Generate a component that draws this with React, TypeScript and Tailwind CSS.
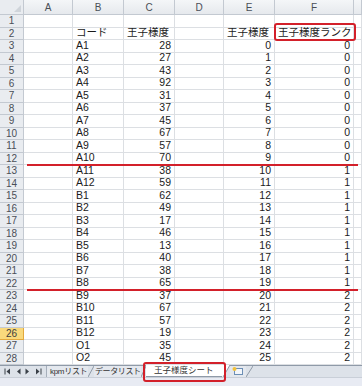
import React from "react";

const codes = ["A1","A2","A3","A4","A5","A6","A7","A8","A9","A10","A11","A12","B1","B2","B3","B4","B5","B6","B7","B8","B9","B10","B11","B12","O1","O2"];
const vals = [28,27,43,92,31,37,45,67,57,70,38,59,62,49,17,46,13,40,38,65,37,67,57,19,35,45];

const widths = ["w-[49px]", "w-[51px]", "w-[51px]", "w-[49px]", "w-[51px]", "w-[79px]", "w-[8px]"];
const letters = ["A", "B", "C", "D", "E", "F", ""];

const font = { fontFamily: '"Liberation Sans", "Noto Sans CJK JP", sans-serif' };

function Cell({ i, children, right }: { i: number; children?: React.ReactNode; right?: boolean }) {
  return (
    <div
      className={`${widths[i]} h-full shrink-0 border-r border-b border-[#dcdfe3] flex items-center overflow-visible whitespace-nowrap text-[#1a1a1a] ${right ? "justify-end pr-[3px]" : "justify-start pl-[3px]"}`}
    >
      {children}
    </div>
  );
}

function Row({ n, cells }: { n: number; cells: { t?: React.ReactNode; r?: boolean }[] }) {
  const active = n === 26;
  return (
    <div className="flex h-[12.5px]">
      <div
        className={`w-[24px] shrink-0 h-full flex items-center justify-center text-[10px] border-r border-b ${
          active
            ? "bg-[#f9d97c] border-[#e2a83c] text-[#3c3c3c]"
            : "bg-[#e9ecf0] border-[#c3c9d1] text-[#4a4f57]"
        }`}
      >
        {n}
      </div>
      {cells.map((c, i) => (
        <Cell key={i} i={i} right={c.r}>
          {c.t}
        </Cell>
      ))}
    </div>
  );
}

function NavIcons() {
  return (
    <div className="w-[46px] shrink-0 flex items-center justify-around px-[2px]">
      <svg width="7" height="7" viewBox="0 0 7 7"><rect x="0.5" y="0.5" width="1" height="6" fill="#3a4048" /><path d="M6 0.5 L2.5 3.5 L6 6.5Z" fill="#3a4048" /></svg>
      <svg width="5" height="7" viewBox="0 0 5 7"><path d="M4.5 0.5 L1 3.5 L4.5 6.5Z" fill="#3a4048" /></svg>
      <svg width="5" height="7" viewBox="0 0 5 7"><path d="M0.5 0.5 L4 3.5 L0.5 6.5Z" fill="#3a4048" /></svg>
      <svg width="7" height="7" viewBox="0 0 7 7"><path d="M1 0.5 L4.5 3.5 L1 6.5Z" fill="#3a4048" /><rect x="5.5" y="0.5" width="1" height="6" fill="#3a4048" /></svg>
    </div>
  );
}

export default function App() {
  const rows: { n: number; cells: { t?: React.ReactNode; r?: boolean }[] }[] = [];
  rows.push({ n: 1, cells: [{}, {}, {}, {}, {}, {}, {}] });
  rows.push({
    n: 2,
    cells: [{}, { t: "コード" }, { t: "王子様度" }, {}, { t: "王子様度" }, { t: "王子様度ランク" }, {}],
  });
  codes.forEach((c, k) => {
    rows.push({
      n: k + 3,
      cells: [
        {},
        { t: c },
        { t: vals[k], r: true },
        {},
        { t: k, r: true },
        { t: Math.floor(k / 10), r: true },
        {},
      ],
    });
  });

  return (
    <div className="relative w-[362px] h-[386px] overflow-hidden bg-white text-[10.5px]" style={font}>
      {/* column headers */}
      <div className="flex h-[15px]">
        <div className="relative w-[24px] shrink-0 h-full bg-[#e9ecf0] border-r border-b border-[#c3c9d1]">
          <svg className="absolute right-[2px] bottom-[2px]" width="7" height="7" viewBox="0 0 7 7">
            <path d="M7 0 L7 7 L0 7Z" fill="#cfd4da" />
          </svg>
        </div>
        {letters.map((l, i) => (
          <div
            key={i}
            className={`${widths[i]} shrink-0 h-full flex items-center justify-center bg-gradient-to-b from-[#f4f6f8] to-[#e6e9ed] border-r border-b border-[#c3c9d1] text-[10px] text-[#4a4f57]`}
          >
            {l}
          </div>
        ))}
      </div>
      {rows.map((r) => (
        <Row key={r.n} n={r.n} cells={r.cells} />
      ))}

      {/* sheet tab bar */}
      <div className="flex h-[12px] bg-[#dde2e9] border-t border-[#8f9aa8] text-[8px] leading-none text-[#333] whitespace-nowrap">
        <NavIcons />
        <div className="relative flex items-stretch">
          <div className="w-[42px] flex items-center pl-[3px] bg-[#e4e8ee] border-l border-[#a6afbb] tracking-[-0.3px]">kpmリスト</div>
          <svg width="6" height="11" viewBox="0 0 6 11" className="shrink-0"><path d="M0 11 L6 0" stroke="#8f9aa8" strokeWidth="1" /></svg>
          <div className="w-[47px] flex items-center pl-[1px] bg-[#e4e8ee] tracking-[-0.4px]">データリスト</div>
          <svg width="5" height="11" viewBox="0 0 5 11" className="shrink-0"><path d="M0 11 L5 0" stroke="#8f9aa8" strokeWidth="1" /></svg>
          <div className="w-[76px] -mt-[1px] flex items-center pl-[8px] bg-white border-b border-[#8f9aa8] text-[8.5px]">王子様度シート</div>
          <svg width="8" height="12" viewBox="0 0 8 12" className="shrink-0 -mt-[1px]"><path d="M0 0 L0 12 L1 12 L8 0Z" fill="#ffffff" /><path d="M1 12 L8 0" stroke="#8f9aa8" strokeWidth="1" /></svg>
          <div className="w-[16px] flex items-center justify-center bg-[#e4e8ee]">
            <svg width="12" height="9" viewBox="0 0 12 9">
              <rect x="2.5" y="1.5" width="8" height="6" fill="#f3f6fa" stroke="#6d8fb5" />
              <circle cx="2.5" cy="2" r="2" fill="#f3c23a" />
            </svg>
          </div>
          <svg width="7" height="11" viewBox="0 0 7 11" className="shrink-0"><path d="M0 11 L7 0" stroke="#8f9aa8" strokeWidth="1" /></svg>
        </div>
      </div>
      <div className="h-[9px] bg-[#e8ebf3] border-t border-[#c9cfd8]" />

      {/* annotations */}
      <div className="absolute left-[27px] top-[164px] w-[331px] h-[2px] bg-[#d3202a]" />
      <div className="absolute left-[27px] top-[289px] w-[331px] h-[2px] bg-[#d3202a]" />
      <div className="absolute left-[274px] top-[23px] w-[82px] h-[18px] border-2 border-[#d3202a] rounded-[3px]" />
      <div className="absolute left-[143px] top-[362px] w-[83px] h-[20px] border-2 border-[#d3202a] rounded-[3px]" />
    </div>
  );
}
